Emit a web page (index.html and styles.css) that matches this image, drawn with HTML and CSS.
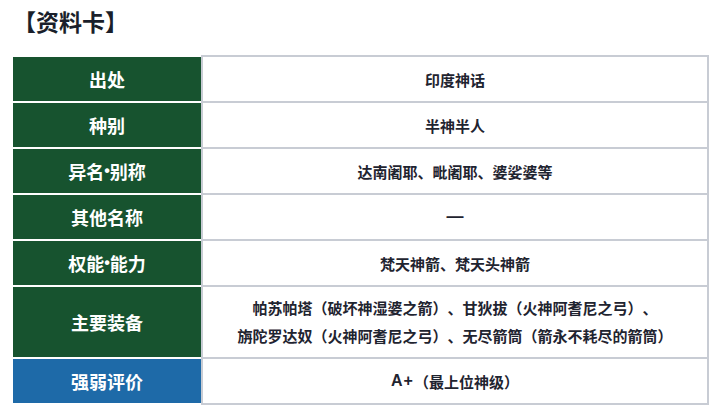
FILE: index.html
```html
<!DOCTYPE html>
<html lang="zh">
<head>
<meta charset="utf-8">
<link rel="stylesheet" href="styles.css">
</head>
<body>
<h2 class="title">【资料卡】</h2>
<div class="card">
  <div class="row"><div class="key">出处</div><div class="val">印度神话</div></div>
  <div class="row"><div class="key">种别</div><div class="val">半神半人</div></div>
  <div class="row"><div class="key">异名<span class="dot">•</span>别称</div><div class="val">达南阇耶、毗阇耶、婆娑婆等</div></div>
  <div class="row"><div class="key">其他名称</div><div class="val"><span class="dash">—</span></div></div>
  <div class="row"><div class="key">权能<span class="dot">•</span>能力</div><div class="val">梵天神箭、梵天头神箭</div></div>
  <div class="row"><div class="key">主要装备</div><div class="val multi">帕苏帕塔（破坏神湿婆之箭）、甘狄拔（火神阿耆尼之弓）、<br>旃陀罗达奴（火神阿耆尼之弓）、无尽箭筒（箭永不耗尽的箭筒）</div></div>
  <div class="row"><div class="key rank">强弱评价</div><div class="val"><span class="latin">A+</span>（最上位神级）</div></div>
</div>
</body>
</html>
```

FILE: styles.css
```css
html, body {
  margin: 0;
  padding: 0;
  background: #ffffff;
}
body {
  font-family: "Noto Sans CJK SC", "Noto Sans", sans-serif;
  color: #1f2430;
  text-spacing-trim: space-all;
}
.title {
  margin: 6px 0 0 13px;
  font-size: 23px;
  line-height: 30px;
  font-weight: 700;
  color: #1a1f2b;
}
.card {
  margin: 19px 0 0 11px;
  width: 698px;
  display: flex;
  flex-direction: column;
}
.row {
  display: flex;
}
.key {
  width: 188px;
  border-left: 2px solid #ffffff;
  border-bottom: 2px solid #ffffff;
  background: #17532f;
  background-clip: padding-box;
  color: #ffffff;
  font-size: 18px;
  font-weight: 700;
  display: flex;
  align-items: center;
  justify-content: center;
  min-height: 44px;
}
.key.rank {
  background: #1e6aa8;
  background-clip: padding-box;
}
.dot {
  font-family: "Liberation Sans", sans-serif;
  font-size: 16px;
}
.row:first-child .key {
  border-top: 2px solid #ffffff;
}
.val {
  flex: 1;
  border-left: 2px solid #c8ccd4;
  border-right: 2px solid #c8ccd4;
  border-bottom: 2px solid #c8ccd4;
  font-size: 15px;
  font-weight: 700;
  color: #1f2430;
  display: flex;
  align-items: center;
  justify-content: center;
  text-align: center;
  min-height: 44px;
}
.row:first-child .val {
  border-top: 2px solid #c8ccd4;
}
.val.multi {
  line-height: 28px;
  padding: 7px 0;
  min-height: 56px;
}
.dash {
  font-family: "Liberation Sans", sans-serif;
  font-size: 17px;
  font-weight: 700;
}
.latin {
  font-family: "Liberation Sans", sans-serif;
  font-size: 16px;
  letter-spacing: 1px;
}
```
